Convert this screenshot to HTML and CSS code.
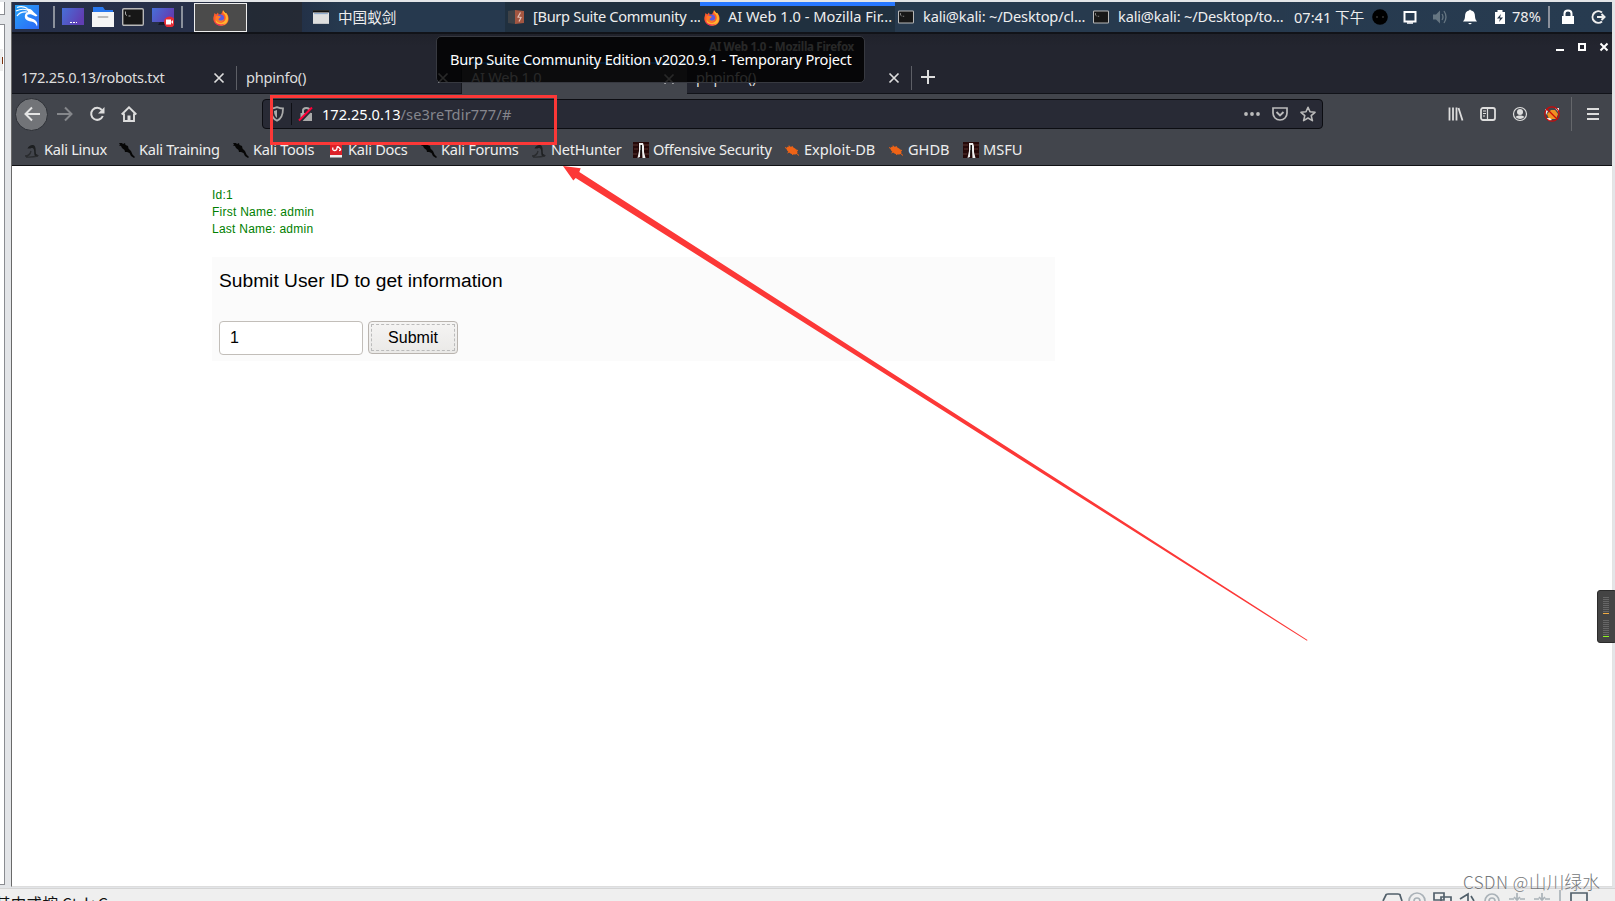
FILE: index.html
```html
<!doctype html>
<html lang="zh">
<head>
    <meta charset="UTF-8">
    <title>AI Web 1.0</title>
    <link rel="stylesheet" href="styles.css">
</head>
<body>
<svg class="defs">
    <symbol id="close" viewBox="0 0 12 12"><path d="M1.5 1.5l9 9M10.5 1.5l-9 9" fill="none" stroke="currentColor" stroke-width="1.7"/></symbol>
    <symbol id="term" viewBox="0 0 22 18"><rect x=".7" y=".7" width="20.6" height="16.6" rx="1.2" fill="#171717" stroke="#b8b8b8" stroke-width="1.4"/><path d="M3.5 3.5v3l1.5 1M6.5 8h2" fill="none" stroke="#aaa"/></symbol>
    <symbol id="fox" viewBox="0 0 16 16">
        <path d="M1.500 3l1.700 1.500L5 2.500l.6 2L8 4.500l2-4.300c1 1.300 1.600 1.800 2.300 3l.7-.5c4.500 4 3.500 12.800-5 13C1.500 15.700-.8 10 .8 6z" fill="#ff5a2c"/>
        <path d="M10 .2c-.5 2 .5 3.300 2 4.500 1.500 3 1 7-3.500 8C5 13 3 11 3 9c-1.500 3 1 6 5 6.300C15 15.500 17 8 13 2.700l-.7.500z" fill="#ffb52e"/>
        <circle cx="7.500" cy="8" r="3.600" fill="#5b5be0"/>
        <path d="M2.500 6.500c2-1.500 4-.5 5.500.2L5.500 9C6 11 9 11 11 9c-.5 4-7 4.500-8.500 0z" fill="#ff7a26"/>
        <path d="M1 9.500c1 4.500 7.500 6.500 11.500 3.500-3 4-10.500 3.500-11.500-3.500z" fill="#f02c62"/>
    </symbol>
    <symbol id="lizard" viewBox="0 0 16 16"><path d="M0 1h3l1 1 2-1 .5 2 2.500 1 .5 2.500L12 9l1.500 3.500L16 15l-1 1-3-2-1.500-3L8 10l-2 0-.5-2L3 6 2 4 0 3.500 1 2.500z" fill="#060606"/></symbol>
    <symbol id="hood" viewBox="0 0 16 16"><path d="M3.500 6.500C5 3 9.500 2 11 4.500c1 2 .5 5 1 7.500l3 1.500-3.500 1c-1.700-1.500-1-4-1.500-6.500C9.500 6 8 5.500 6.500 6.500z" fill="#1d1f21"/><path d="M1 14q5 0 6-5M2 15q6 .5 12-1" fill="none" stroke="#2a2c2f" stroke-width="1.300"/></symbol>
    <symbol id="offsec" viewBox="0 0 16 16"><path fill="#250909" d="M0 0h16v16H0z"/><path d="M0 3h5M11 3h5M1 7h4M11 7h4M0 12h4M12 12h4" stroke="#5b3431"/><path d="M6 1h4l1 3v6l1.500 6H9.500L9 8H7.500L7 15l-2.500 1L6 9z" fill="#eee"/><path d="M7.500 3H9v5l-1 6h-.7z" fill="#111"/></symbol>
    <symbol id="bug" viewBox="0 0 16 16"><ellipse cx="8" cy="8.500" rx="6" ry="3.300" transform="rotate(28 8 8.500)" fill="#ef6316"/><path d="M1 5.500l3 1.500M5 3.500l1 3M8 4l1 2.500M12 8l2 .5M12 11l3 2.500M8 11.500l1 1.500M5 10l-1.500 1" stroke="#ef6316" stroke-width="1"/></symbol>
</svg>

<div class="desk">
    <div class="side">
        <div class="side-top"></div>
        <div class="side-box"><i></i></div>
    </div>
    <div class="vm">
        <div class="panel">
            <svg class="kali" viewBox="0 0 24 24">
                <defs><linearGradient id="kg" x2="1" y2="1"><stop stop-color="#27a4f6"/><stop offset="1" stop-color="#2c67f6"/></linearGradient></defs>
                <path fill="url(#kg)" d="M0 0h24v24H0z"/>
                <path d="M2 2.500c4-1.500 7-1 10.500 1M1 6c4-2 7-2.500 11-1M2 11c2-3 5-4.500 10-4" fill="none" stroke="#fff" stroke-width="1.200"/>
                <path d="M11 3.500c4 0 6 1 7.500 3.500l4 3.500-1.500 1-4.500-2c-3.500-.5-5 .5-4 2 1 1.500 6 1.500 8.500 4.500 1.500 1.700 1.500 3.500 1 5.500-1-3-3-4.500-6-5-4-.6-7-2.500-6-6.500.3-1.500 1.500-2.500 3-3z" fill="#fff"/>
            </svg>
            <i class="sep sep-a"></i>
            <svg class="launch" viewBox="0 0 22 20"><defs><linearGradient id="dg" x2="1" y2=".4"><stop stop-color="#4770d8"/><stop offset="1" stop-color="#603eb3"/></linearGradient></defs><path fill="url(#dg)" d="M0 1h22v17H0z"/><path d="M8 15.500h2M11 15.500h2M14 15.500h1" stroke="#fff"/></svg>
            <svg class="launch" viewBox="0 0 22 20"><path d="M1 0h10l2 3h8v4H1z" fill="#2878ee"/><path d="M0 5h22v15H0z" fill="#f5f5f5"/><path d="M6.500 10h9" stroke="#bbb" stroke-width="2" stroke-linecap="round"/></svg>
            <svg class="launch"><use href="#term"/></svg>
            <svg class="launch" viewBox="0 0 22 20"><path fill="url(#dg)" d="M0 1h22v14H0z"/><path d="M6 18h8l-1-3H8z" fill="#171b29"/><circle cx="17.500" cy="15" r="5.500" fill="#e62c35"/><path d="M14 12.500h5v5h-5zM19 15l2-2v4z" fill="#fff"/></svg>
            <i class="sep sep-b"></i>
            <div class="workspace"><svg><use href="#fox"/></svg></div>
            <div class="task ant">
                <svg viewBox="0 0 14 14"><path d="M0 1h14v12H0z" fill="#dedede"/><path d="M0 1h14v2H0z" fill="#111"/><path d="M1 4h12" stroke="#8fa9ca"/></svg>
                <span>中国蚁剑</span>
            </div>
            <div class="task burp">
                <svg viewBox="0 0 16 16"><path d="M0 2l7-1v14l-7-1z" fill="#3e4247"/><path d="M7 1l9 1v12l-9 1z" fill="#a35641"/><path d="M12.500 3.500L10 8l3 .5-2 4" fill="none" stroke="#e3c3b9" stroke-width="1.200"/></svg>
                <span>[Burp Suite Community ...</span>
            </div>
            <div class="task web"><svg><use href="#fox"/></svg><span>AI Web 1.0 - Mozilla Fir...</span></div>
            <div class="task tty"><svg><use href="#term"/></svg><span>kali@kali: ~/Desktop/cl...</span></div>
            <div class="task tty"><svg><use href="#term"/></svg><span>kali@kali: ~/Desktop/to...</span></div>
            <div class="tray">
                <span class="clock">07:41 下午</span>
                <svg viewBox="0 0 16 16"><circle cx="8" cy="8" r="7.800" fill="#000"/><circle cx="5" cy="8" r="1" fill="#333"/><circle cx="11" cy="8" r="1" fill="#333"/></svg>
                <svg viewBox="0 0 16 16"><path d="M2.500 3h11v9.500h-11z" fill="none" stroke="#fff" stroke-width="2"/><path d="M5 14h6" stroke="#fff" stroke-width="1.500"/></svg>
                <svg viewBox="0 0 16 16"><path d="M1 5.500h3l4-4v13l-4-4H1z" fill="#667682"/><path d="M10 5q2 3 0 6M12 2q4 6 0 12" fill="none" stroke="#667682" stroke-width="1.300"/></svg>
                <svg viewBox="0 0 16 16"><path d="M8 .5l1 1c3 .5 4 3 4 6 0 2 1 4 2 5H1c1-1 2-3 2-5 0-3 1-5.500 4-6zM6 14h4l-2 1.500z" fill="#fff"/></svg>
                <svg class="bat" viewBox="0 0 16 16"><path d="M5.500 1h5v2H13v12H3V3h2.500z" fill="#fff"/><path d="M9 5l-4 4.500h3L7 13l4-4.500H8z" fill="#26364a"/></svg>
                <span class="pct">78%</span>
                <i class="sep"></i>
                <svg class="lock" viewBox="0 0 16 16"><path d="M2 7h12v8H2z" fill="#fff"/><path d="M4.500 7V4.500q0-3 3.500-3t3.500 3V7" fill="none" stroke="#fff" stroke-width="2"/></svg>
                <svg viewBox="0 0 16 16"><path d="M12 3.500a5.800 5.800 0 1 0 0 9M7 8h7M11.500 5l3 3-3 3" fill="none" stroke="#eee" stroke-width="2"/></svg>
            </div>
        </div>

        <div class="titlebar">
            <b>AI Web 1.0 - Mozilla Firefox</b>
            <div class="winbtns">
                <svg viewBox="0 0 10 10"><path d="M1 8h8" stroke="#fff" stroke-width="2"/></svg>
                <svg viewBox="0 0 10 10"><path d="M2 2h6v6H2z" fill="none" stroke="#fff" stroke-width="2"/></svg>
                <svg viewBox="0 0 10 10"><path d="M1.500 1.500l7 7M8.500 1.500l-7 7" stroke="#fff" stroke-width="2"/></svg>
            </div>
        </div>
        <div class="tabs">
            <div class="tab"><span class="robots">172.25.0.13/robots.txt</span><svg><use href="#close"/></svg></div>
            <div class="tab second"><span>phpinfo()</span><svg><use href="#close"/></svg></div>
            <div class="tab active"><span>AI Web 1.0</span><svg><use href="#close"/></svg></div>
            <div class="tab last"><span>phpinfo()</span><svg><use href="#close"/></svg></div>
            <svg class="plus" viewBox="0 0 14 14"><path d="M7 0v14M0 7h14" stroke="#ddd" stroke-width="2"/></svg>
        </div>

        <div class="toolbar">
            <div class="back"><svg viewBox="0 0 16 16"><path d="M16 8H1M8 1.500L1.500 8 8 14.500" fill="none" stroke="#e4e4e4" stroke-width="2"/></svg></div>
            <svg class="fwd" viewBox="0 0 16 16"><path d="M0 8h15M8 1.500L14.500 8 8 14.500" fill="none" stroke="#85878b" stroke-width="2"/></svg>
            <svg class="reload" viewBox="0 0 16 16"><path d="M12.800 4A6 6 0 1 0 13.800 10" fill="none" stroke="#ddd" stroke-width="2"/><path d="M15.500 1v6.500H9z" fill="#ddd"/></svg>
            <svg class="home" viewBox="0 0 16 16"><path d="M.7 8.500L8 1.300l7.300 7.200M3 7.500V15h10V7.500" fill="none" stroke="#ddd" stroke-width="1.900"/><path d="M6.500 9.500h3V15h-3z" fill="#ddd"/></svg>
            <div class="urlbar">
                <svg class="shield" viewBox="0 0 16 16"><path d="M8 1.200q3 1.300 6 1.300c0 6-1 10-6 12.300C3 12.500 2 8.500 2 2.500q3 0 6-1.300z" fill="none" stroke="#aaa" stroke-width="1.800"/><path d="M8 4v8c-2-1.500-3-4-3-7z" fill="#aaa"/></svg>
                <i></i>
                <svg class="insecure" viewBox="0 0 16 16"><path d="M2.500 7h11.500v8H2.500z" fill="#aaa"/><path d="M5 7V4.500Q5 2 8.300 2t3.200 2.500V7" fill="none" stroke="#aaa" stroke-width="2"/><path d="M2 15.500L15 2" stroke="#2a2a35" stroke-width="3"/><path d="M1 14.500L14 1.500" stroke="#ff0039" stroke-width="2"/></svg>
                <p class="url">172.25.0.13<span>/se3reTdir777/#</span></p>
                <svg class="dots" viewBox="0 0 16 16"><g fill="#bbb"><circle cx="2" cy="8" r="1.900"/><circle cx="8" cy="8" r="1.900"/><circle cx="14" cy="8" r="1.900"/></g></svg>
                <svg viewBox="0 0 16 16"><path d="M1 2h14v5c0 4-3 7-7 7s-7-3-7-7z" fill="none" stroke="#bbb" stroke-width="1.700"/><path d="M4.500 6L8 9.500 11.500 6" fill="none" stroke="#bbb" stroke-width="1.900"/></svg>
                <svg viewBox="0 0 16 16"><path d="M8 1.300l2 4.500 5 .5-3.800 3.300 1.200 5L8 12l-4.400 2.600 1.200-5L1 6.300l5-.5z" fill="none" stroke="#bbb" stroke-width="1.600" stroke-linejoin="round"/></svg>
            </div>
            <div class="tools">
                <svg viewBox="0 0 16 16"><path d="M1.500 1.500v13M5 1.500v13M8.500 1.500v13M10.500 2l4 12.500" stroke="#ddd" stroke-width="1.800"/></svg>
                <svg viewBox="0 0 16 16"><rect x="1" y="2" width="14" height="12" rx="2" fill="none" stroke="#ddd" stroke-width="1.800"/><path d="M7.500 2v12M3 5h3M3 7.500h3M3 10h2" stroke="#ddd" stroke-width="1.200"/></svg>
                <svg viewBox="0 0 16 16"><circle cx="8" cy="8" r="6.500" fill="none" stroke="#ddd" stroke-width="1.200"/><circle cx="8" cy="6" r="3" fill="#ddd"/><path d="M3.500 11q1.500-2 4.500-1.500 3-.5 4.500 1.500Q8 15 3.500 11" fill="#ddd"/></svg>
                <svg viewBox="0 0 16 16"><path d="M3 8l4-4 4 0 3 4-2 5H5z" fill="#ef9122"/><path d="M1 3l3 2-2 4zM11 2l4 0v5zM2 12l4 0 2 2-3 1z" fill="#eee"/><circle cx="8" cy="8" r="7.200" fill="none" stroke="#cd0909" stroke-width="1.200"/><path d="M3 3l10 10" stroke="#cd0909" stroke-width="1.200"/></svg>
                <i></i>
                <svg class="menu" viewBox="0 0 12 12"><path d="M0 1h12M0 6h12M0 11h12" stroke="#ddd" stroke-width="1.800"/></svg>
            </div>
        </div>
        <div class="bookmarks">
            <a class="b1"><svg><use href="#hood"/></svg>Kali Linux</a>
            <a class="b2"><svg><use href="#lizard"/></svg>Kali Training</a>
            <a class="b3"><svg><use href="#lizard"/></svg>Kali Tools</a>
            <a class="b4"><svg viewBox="0 0 16 16"><path d="M2 0h12v13H2z" fill="#dc2028"/><path d="M2 13h12v2.500H2z" fill="#eee"/><path d="M5 5.500q-1 3 1.500 3T9 6t2.500 0-.5 2.500" fill="none" stroke="#fff" stroke-width="1.300"/></svg>Kali Docs</a>
            <a class="b5"><svg><use href="#lizard"/></svg>Kali Forums</a>
            <a class="b6"><svg><use href="#hood"/></svg>NetHunter</a>
            <a class="b7"><svg><use href="#offsec"/></svg>Offensive Security</a>
            <a class="b8"><svg><use href="#bug"/></svg>Exploit-DB</a>
            <a class="b9"><svg><use href="#bug"/></svg>GHDB</a>
            <a class="b10"><svg><use href="#offsec"/></svg>MSFU</a>
        </div>

        <div class="page">
            <div class="result">Id:1<br>First Name: admin<br>Last Name: admin</div>
            <form class="box">
                <h1>Submit User ID to get information</h1>
                <div class="row">
                    <input type="text" value="1">
                    <button type="button"><span>Submit</span></button>
                </div>
            </form>
        </div>
    </div>
</div>

<div class="status">
    <span>其中或按 Ctrl+G。</span>
    <svg class="devices" viewBox="0 0 220 12">
        <g fill="none" stroke="#52606b" stroke-width="1.700">
            <path d="M1 12L4 6q0-1 2-1h10q2 0 2 1l2 6M52 4h10v7H52zM59 8h10v5H59zM78 10l8-5v7M89 7l3 5M189 12V4h16v8"/>
            <g stroke="#aab2b8"><circle cx="35" cy="12" r="8"/><circle cx="35" cy="12" r="3"/><circle cx="110" cy="12" r="7"/><circle cx="110" cy="12" r="3"/><path d="M135 4v8M127 10h5M138 10h5M132 8l3 3 3-3M160 4v8M152 10h5M163 10h5M157 8l3 3 3-3M178 1v11"/></g>
        </g>
    </svg>
</div>

<div class="tooltip">Burp Suite Community Edition v2020.9.1 - Temporary Project</div>
<div class="mark"></div>
<svg class="arrow" viewBox="0 0 745 476"><path d="M0 0L17.700 2.300 16.300 6 744.500 474 744 474.800 12.700 12 10.300 14.500z" fill="#fc3837"/></svg>
<div class="meter"><i></i><i></i><i></i><i></i><i></i><i></i><i></i><i></i><i class="orange"></i><b></b><i></i><i></i><i></i><i></i><i></i><i></i><i></i><i></i><i class="green"></i></div>
<div class="watermark"><span>CSDN @</span>山川绿水</div>
</body>
</html>
```
FILE: styles.css
```css
* {
    box-sizing: border-box;
    margin: 0;
    padding: 0;
}

body {
    position: relative;
    width: 1615px;
    height: 901px;
    overflow: hidden;
    background: #efefef;
    font-family: "Noto Sans", "Noto Sans CJK SC", sans-serif;
    font-size: 14.6px;
    color: #eee;
}

svg {
    display: block;
    flex: none;
    width: 16px;
    height: 16px;
}

.defs {
    position: absolute;
    width: 0;
    height: 0;
}

.desk {
    display: flex;
    height: 889px;
    padding-top: 2px;
    border-bottom: 1px solid #d5d5d5;
    background: #e3e5e8;
}

.side {
    width: 11px;
    height: 883px;
}

.side-top {
    width: 5px;
    height: 13px;
    background: #fff;
    border: solid #8a8c91;
    border-width: 0 1px 1px 0;
}

.side-box {
    width: 5px;
    height: 861px;
    margin-top: 9px;
    padding-top: 24px;
    background: #fff;
    border: solid #8a8c91;
    border-width: 1px 1px 1px 0;
}

.side-box i {
    display: block;
    width: 3px;
    height: 22px;
    background: linear-gradient(90deg, #eee 2px, #7c310d 2px) center / 3px 7px no-repeat, #eee;
}

.vm {
    display: flex;
    flex-direction: column;
    width: 1602px;
    height: 885px;
    border-left: 1px solid #696969;
    border-right: 1px solid #e3e3e3;
    border-bottom: 1px solid #ddd;
    background: #fff;
}

/* xfce panel */
.panel {
    display: flex;
    align-items: center;
    height: 31px;
    padding-left: 3px;
    background: linear-gradient(90deg, #26304a 0, #273049 180px, #232a35 240px, #252a35 290px, #26384b 291px, #273b50 100%);
    border-bottom: 1px solid #111319;
    white-space: nowrap;
}

.kali {
    width: 24px;
    height: 24px;
}

.sep {
    flex: none;
    width: 2px;
    height: 22px;
    background: #8b919c;
}

.sep-a {
    margin: 0 7px 0 14px;
}

.launch {
    width: 22px;
    height: 20px;
    margin-right: 8px;
}

.sep-b {
    margin: 0 11px 0 -1px;
}

.workspace {
    flex: none;
    width: 53px;
    height: 29px;
    margin-right: 55px;
    padding: 6px 18px;
    background: #4b4b4b;
    border: 1px solid #eee;
}

.task {
    display: flex;
    flex: none;
    align-items: center;
    width: 195px;
    height: 30px;
    padding-left: 3px;
}

.task span {
    margin: -2px 0 0 9px;
}

.task.ant {
    width: 203px;
    padding-left: 11px;
    background: linear-gradient(90deg, #233148, #26394e 40px);
}

.burp {
    background: #20303f;
}

.burp span {
    letter-spacing: -.32px;
}

.task.web {
    padding-left: 4px;
    background: #20303f;
    border-top: 4px solid #2777ff;
}

.task.web span {
    margin: -6px 0 0 8px;
}

.web svg {
    margin-top: -3px;
}

.tty {
    background: #273a4e;
}

.tty span {
    letter-spacing: -.16px;
}

.tray {
    display: flex;
    flex: none;
    align-items: center;
    padding-left: 9px;
}

.tray span {
    margin-top: -2px;
}

.clock {
    width: 69px;
    margin-right: 9px;
}

.tray svg {
    margin-right: 14px;
}

.tray .bat {
    margin-right: 4px;
}

.pct {
    width: 32px;
    margin-right: 4px;
}

.tray .lock {
    margin: 0 14px 0 10px;
}

/* firefox window */
.titlebar {
    display: flex;
    align-items: flex-start;
    justify-content: space-between;
    height: 29px;
    padding: 4px 3px 0 697px;
    background: linear-gradient(#20222b, #23252f 12px);
    border-top: 1px solid #111318;
    font-size: 11.5px;
    line-height: 18px;
    letter-spacing: -.28px;
    color: #ddd;
}

.winbtns {
    display: flex;
    gap: 12px;
    padding-top: 4px;
}

.winbtns svg {
    width: 10px;
    height: 10px;
}

.tabs {
    display: flex;
    height: 32px;
    background: #23252f;
    border-bottom: 1px solid #111319;
    color: #ddd;
}

.tab {
    display: flex;
    align-items: center;
    justify-content: space-between;
    width: 225px;
    padding: 0 12px 0 9px;
    background: linear-gradient(#5d5f66, #5d5f66) right 4px / 1px 24px no-repeat;
}

.tab svg {
    width: 12px;
    height: 12px;
}

.tab span {
    margin-top: -2px;
    letter-spacing: -.25px;
}

.tab .robots {
    letter-spacing: -.33px;
}

.tab.active {
    height: 32px;
    background: #42454c;
    border-top: 2px solid #0a84ff;
}

.tab.active span {
    margin-top: -4px;
}

.tab.second {
    background: none;
    border-right: 1px solid #15171c;
}

.plus {
    width: 14px;
    height: 14px;
    margin: 8px 0 0 9px;
}

.toolbar {
    display: flex;
    align-items: center;
    height: 41px;
    padding-bottom: 1px;
    background: #42454c;
}

.back {
    display: flex;
    align-items: center;
    justify-content: center;
    width: 33px;
    height: 33px;
    margin-left: 3px;
    background: #727478;
    border: 1px solid #2d3036;
    border-radius: 50%;
}

.fwd {
    margin-left: 9px;
}

.reload,
.home {
    margin-left: 16px;
}

.urlbar {
    display: flex;
    align-items: center;
    width: 1061px;
    height: 30px;
    margin-left: 125px;
    padding: 0 6px;
    background: #282a35;
    border: 1px solid #0c0d12;
    border-radius: 4px;
}

.urlbar i {
    width: 1px;
    height: 22px;
    margin: 0 7px 0 6px;
    background: #0e0f14;
}

.urlbar .insecure {
    margin-left: -1px;
}

.url {
    flex: 1;
    margin-left: 8px;
    color: #fff;
}

.url span {
    letter-spacing: .15px;
    color: #85868d;
}

.urlbar svg:nth-last-child(-n+2) {
    margin-left: 12px;
}

.tools {
    display: flex;
    align-items: center;
    gap: 16px;
    margin-left: 125px;
}

.tools i {
    width: 1px;
    height: 34px;
    margin: 0 -1px 0 -5px;
    background: #65676b;
}

.tools .menu {
    width: 12px;
    height: 12px;
}

.bookmarks {
    display: flex;
    align-items: center;
    height: 31px;
    padding: 0 0 2px 12px;
    background: #42454c;
    border-bottom: 1px solid #101114;
    letter-spacing: -.28px;
    white-space: nowrap;
}

.bookmarks a {
    display: flex;
    align-items: center;
    gap: 4px;
}

.bookmarks svg {
    margin-top: 2px;
}

.b1 { width: 95px; }
.b2 { width: 114px; }
.b3 { width: 95px; }
.b4 { width: 93px; }
.b5 { width: 110px; }
.b6 { width: 102px; }
.b7 { width: 151px; }
.b8 { width: 104px; }
.b9 { width: 75px; }

.b8,
.b9,
.b10 {
    letter-spacing: 0;
}

.page {
    flex: 1;
    padding: 21px 0 0 200px;
    background: #fff;
}

.result {
    height: 70px;
    font-family: "Liberation Sans", Arial, sans-serif;
    font-size: 12px;
    line-height: 17px;
    letter-spacing: .25px;
    color: #008000;
}

.box {
    width: 843px;
    height: 104px;
    padding: 13px 7px 0;
    background: #fbfbfb;
    font-family: "Liberation Sans", Arial, sans-serif;
    color: #000;
}

h1 {
    font-size: 19.2px;
    font-weight: normal;
    line-height: 22px;
}

.row {
    display: flex;
    gap: 5px;
    margin-top: 29px;
}

input {
    width: 144px;
    height: 34px;
    padding-left: 10px;
    border: 1px solid #c2beb9;
    border-radius: 4px;
    font: 16px "Liberation Sans", Arial, sans-serif;
}

button {
    width: 90px;
    height: 33px;
    padding: 2px;
    border: 1px solid #b9b4af;
    border-radius: 4px;
    background: linear-gradient(#f5f4f3, #eae9e7);
    font: 16px "Liberation Sans", Arial, sans-serif;
}

button span {
    display: block;
    height: 27px;
    border: 1px dashed #bbb;
    line-height: 25px;
}

/* host window */
.status {
    display: flex;
    justify-content: space-between;
    height: 12px;
    overflow: hidden;
    background: #efefef;
    color: #111;
    font-family: "Noto Sans CJK SC", sans-serif;
    font-size: 15.5px;
    line-height: 20px;
}

.status span {
    margin: 4px 0 0 -5px;
    letter-spacing: .3px;
}

.devices {
    width: 220px;
    height: 12px;
    margin-right: 13px;
}

/* overlays */
.tooltip {
    position: absolute;
    left: 436px;
    top: 36px;
    width: 429px;
    height: 47px;
    padding-left: 13px;
    background: rgba(0, 0, 0, .82);
    border: 1px solid #373940;
    border-radius: 5px;
    line-height: 44px;
    letter-spacing: -.21px;
    color: #fff;
    white-space: nowrap;
}

.mark {
    position: absolute;
    left: 270px;
    top: 95px;
    width: 287px;
    height: 50px;
    border: 3px solid #fc3837;
}

.arrow {
    position: absolute;
    left: 563px;
    top: 166px;
    width: 745px;
    height: 476px;
}

.meter {
    position: absolute;
    left: 1597px;
    top: 590px;
    width: 20px;
    height: 53px;
    padding: 6px 0 0 5px;
    background: #444;
    border: 1px solid #2b2b2b;
    border-radius: 3px;
}

.meter i {
    display: block;
    width: 6px;
    height: 1px;
    margin-bottom: 1px;
    background: #666;
}

.meter b {
    display: block;
    height: 5px;
}

.meter .orange {
    background: #f0ab42;
}

.meter .green {
    background: #8df522;
}

.watermark {
    position: absolute;
    left: 1463px;
    top: 868px;
    font-size: 17.8px;
    font-weight: 300;
    line-height: 27px;
    font-family: "Noto Sans CJK SC", sans-serif;
    white-space: nowrap;
    color: #75777a;
    text-shadow: 0 0 1px #fff;
}

.watermark span {
    font-size: 17px;
    letter-spacing: .5px;
}
```
